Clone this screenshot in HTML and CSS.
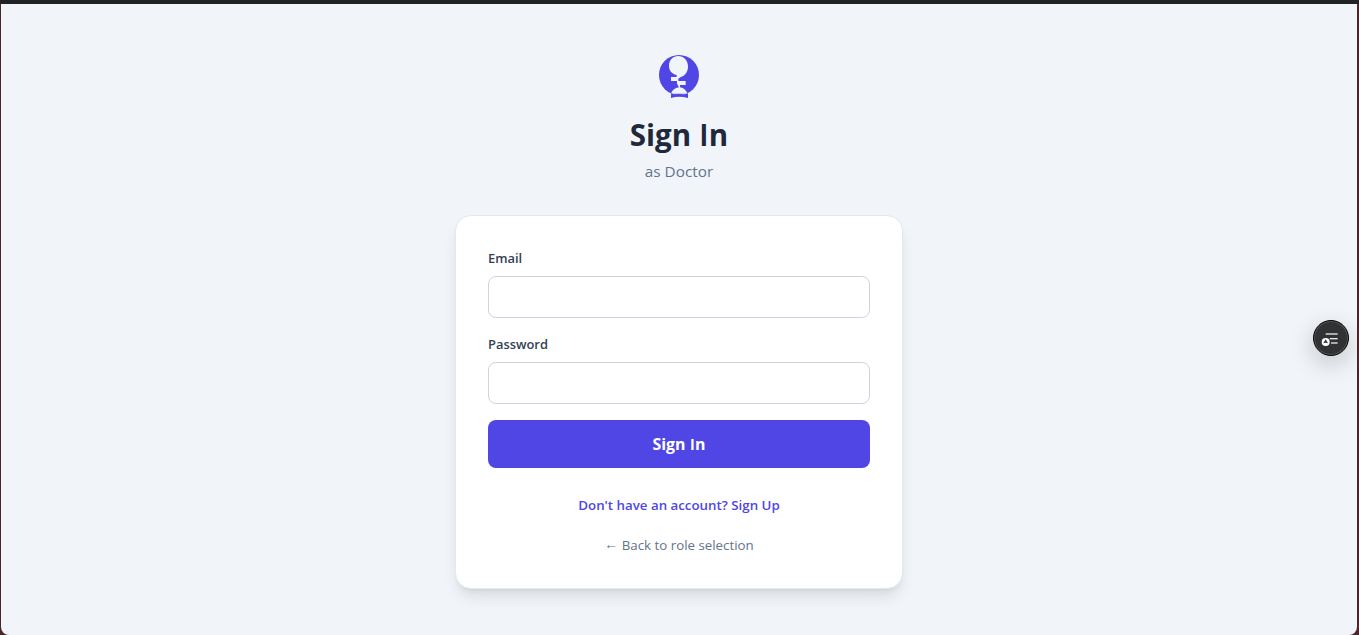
FILE: index.html
```html
<!DOCTYPE html>
<html lang="en">
<head>
  <meta charset="UTF-8">
  <title>Sign In</title>
  <link rel="stylesheet" href="styles.css">
</head>
<body>
  <div class="frame">
    <main class="page">
      <svg class="logo" viewBox="18 15 144 144">
        <circle cx="90" cy="87" r="60" fill="#4f46e5"/>
        <path d="M88 30C104 30 117 43 117 61C117 77 109 90 94 94L88 98V105H110V117H93V124C105 126 112 134 116 143H66C69 133 77 126 90 124L84 113V105H66V93H83V87C68 83 60 73 60 59C60 42 72 30 88 30Z" fill="#f1f5f9"/>
        <path d="M66 142Q90 152 117 142V156Q90 149 66 156Z" fill="#4f46e5"/>
      </svg>
      <h1>Sign <span class="cap">I</span>n</h1>
      <p class="role">as Doctor</p>

      <form class="card">
        <label for="email">Email</label>
        <input id="email" type="email">
        <label for="password">Password</label>
        <input id="password" type="password">
        <button type="submit">Sign <span class="cap">I</span>n</button>
        <a class="signup" href="#">Don't have an account? Sign Up</a>
        <a class="back" href="#"><span class="arrow">←</span> Back to role selection</a>
      </form>
    </main>
  </div>

  <div class="reader">
    <svg width="36" height="36" viewBox="0 0 108 108">
      <g fill="#e8e8e8">
        <rect x="38" y="40" width="36" height="4"/>
        <rect x="50" y="54" width="24" height="4"/>
        <rect x="54" y="67" width="20" height="4"/>
      </g>
      <circle cx="38" cy="66" r="12" fill="#fff"/>
      <path d="M38 58L45 70L38 68L31 70Z" fill="#303234"/>
    </svg>
  </div>
</body>
</html>
```

FILE: styles.css
```css
* {
  box-sizing: border-box;
}
body {
  margin: 0;
  height: 635px;
  overflow: hidden;
  background: linear-gradient(#202224, #202224) top / 100% 4px no-repeat, #4a2529;
  font-family: "Open Sans", "Noto Sans", sans-serif;
  color: #1e293b;
}
.frame {
  height: 100%;
  padding: 4px 2px 0 1px;
}
.page {
  height: 631px;
  padding-top: 47px;
  display: flex;
  flex-direction: column;
  align-items: center;
  background: #f1f5f9;
  border-radius: 0 0 8px 8px;
}
.logo {
  width: 48px;
  height: 48px;
}
h1 {
  margin: 18px 0 0;
  font-size: 29.5px;
  line-height: 36px;
  font-weight: 700;
}
.cap {
  font-family: Lato, sans-serif;
  line-height: 1;
  margin: 0 0.02em;
}
.role {
  margin: 6px 0 32px;
  font-size: 15.3px;
  line-height: 24px;
  color: #64748b;
}
.card {
  width: 448px;
  height: 374px;
  padding: 32px;
  display: flex;
  flex-direction: column;
  background: #fff;
  border: 1px solid #e2e8f0;
  border-radius: 16px;
  box-shadow: 0 10px 15px -3px rgba(0, 0, 0, 0.1), 0 4px 6px -4px rgba(0, 0, 0, 0.1);
}
label {
  margin-bottom: 8px;
  font-size: 12.9px;
  line-height: 20px;
  font-weight: 600;
  color: #334155;
}
input {
  height: 42px;
  margin: 0 0 16px;
  padding: 8px 16px;
  border: 1px solid #cbd5e1;
  border-radius: 8px;
  background: #fff;
}
button {
  height: 48px;
  border: none;
  border-radius: 8px;
  background: #4f46e5;
  color: #fff;
  font-family: inherit;
  font-size: 15.9px;
  font-weight: 700;
}
.signup, .back {
  align-self: center;
  font-size: 13.3px;
  line-height: 20px;
  text-decoration: none;
}
.signup {
  margin: 27px 0 20px;
  font-weight: 600;
  color: #4f46e5;
}
.back {
  color: #64748b;
}
.arrow {
  font-size: 14px;
  line-height: 1;
  vertical-align: 1px;
}
.reader {
  position: absolute;
  top: 320px;
  left: 1313px;
  width: 36px;
  height: 36px;
  border-radius: 50%;
  background: #303234;
  border: 1px solid #050505;
  box-shadow: inset 0 0 0 1px #555, 0 8px 24px rgba(0, 0, 0, 0.2);
}
.reader svg {
  display: block;
  margin: -1px;
}
```
